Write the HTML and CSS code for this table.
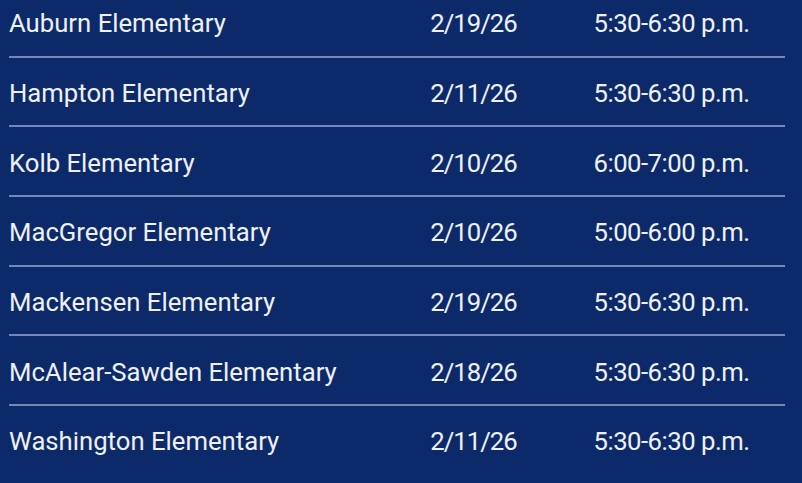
FILE: index.html
```html
<!DOCTYPE html>
<html lang="en">
<head>
<meta charset="utf-8">
<title>Elementary schedule</title>
<link rel="stylesheet" href="styles.css">
</head>
<body>
<table class="schedule">
  <tbody>
    <tr class="row"><td class="name">Auburn Elementary</td><td class="date">2/19/26</td><td class="time">5:30-6:30 p.m.</td></tr>
    <tr class="row"><td class="name">Hampton Elementary</td><td class="date">2/11/26</td><td class="time">5:30-6:30 p.m.</td></tr>
    <tr class="row"><td class="name">Kolb Elementary</td><td class="date">2/10/26</td><td class="time">6:00-7:00 p.m.</td></tr>
    <tr class="row"><td class="name">MacGregor Elementary</td><td class="date">2/10/26</td><td class="time">5:00-6:00 p.m.</td></tr>
    <tr class="row"><td class="name">Mackensen Elementary</td><td class="date">2/19/26</td><td class="time">5:30-6:30 p.m.</td></tr>
    <tr class="row"><td class="name">McAlear-Sawden Elementary</td><td class="date">2/18/26</td><td class="time">5:30-6:30 p.m.</td></tr>
    <tr class="row last"><td class="name">Washington Elementary</td><td class="date">2/11/26</td><td class="time">5:30-6:30 p.m.</td></tr>
  </tbody>
</table>
</body>
</html>
```
FILE: styles.css
```css
html, body {
  margin: 0;
  padding: 0;
  background: #0c2a69;
}

body {
  height: 483px;
  overflow: hidden;
  font-family: Roboto, "Liberation Sans", sans-serif;
  color: #eef0f6;
}

.schedule {
  margin: -12px 0 0 9px;
  width: 776px;
  border-collapse: separate;
  border-spacing: 0;
  table-layout: fixed;
  font-size: 25.7px;
}

.schedule td {
  height: 64.7px;
  padding: 3px 0 0;
  border-bottom: 2px solid rgba(190, 198, 232, 0.6);
  vertical-align: middle;
  white-space: nowrap;
}

.row.last td {
  border-bottom: none;
}

.name {
  width: 380px;
  text-align: left;
}

.date {
  width: 169px;
  text-align: center;
  letter-spacing: -1px;
}

.time {
  width: 227px;
  text-align: center;
  letter-spacing: -0.5px;
}
```
